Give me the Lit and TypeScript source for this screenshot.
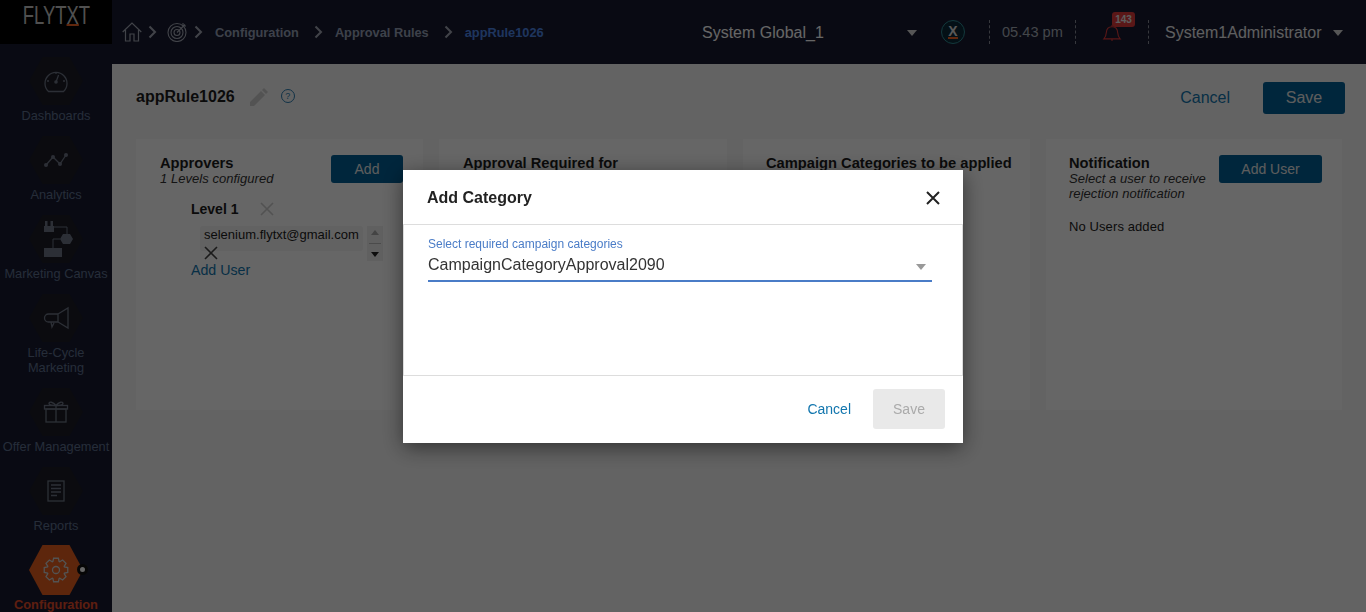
import { LitElement, html, css, svg } from "lit";
import { customElement } from "lit/decorators.js";

const chevron = html`<svg class="chev" width="9" height="14" viewBox="0 0 9 14"><path d="M1.5 1.5 7 7l-5.5 5.5" fill="none" stroke="currentColor" stroke-width="2"/></svg>`;
const cross = (size: number, color: string, w = 1.6) => html`<svg width=${size} height=${size} viewBox="0 0 14 14" style="color:${color}"><path d="M1 1l12 12M13 1 1 13" fill="none" stroke="currentColor" stroke-width=${w}/></svg>`;

// gear outline with 8 teeth, centred on 12,11
const gearPath = () => {
  const pts: string[] = [];
  for (let i = 0; i < 8; i++) {
    const a = (i * Math.PI) / 4;
    [[-0.36, 9], [-0.2, 12], [0.2, 12], [0.36, 9]].forEach(([da, r]) => {
      pts.push(`${(12 + r * Math.sin(a + da)).toFixed(2)} ${(11 - r * Math.cos(a + da)).toFixed(2)}`);
    });
  }
  return "M" + pts.join("L") + "Z";
};

const navIcons: Record<string, unknown> = {
  gauge: svg`<path d="M4.500 21.500a11 11 0 1 1 15 0z"/><circle cx="12" cy="12" r="1.800" class="solid"/><path d="M12 12l2.600-7M3 11h2M19 11h2M12 2v2"/>`,
  chart: svg`<path d="M2 16 9 8l7 7 6-9"/><circle cx="2" cy="16" r="2" class="solid"/><circle cx="9" cy="8" r="2" class="solid"/><circle cx="16" cy="15" r="2" class="solid"/><circle cx="22" cy="6" r="2" class="solid"/>`,
  horn: svg`<path d="M14 7 24 1v20L14 15zM14 7H4.500a4 4 0 0 0 0 8H14M7 15l1 5 2-4"/>`,
  gift: svg`<rect x="2" y="8" width="20" height="13"/><rect x="0.500" y="4.500" width="23" height="3.500"/><path d="M12 4.500V21M12 4.500C9 .5 5 .5 5 2.500s4 2 7 2c3 0 7 0 7-2s-4-2-7 2"/>`,
  report: svg`<rect x="4" y="1" width="16" height="20"/><path d="M7 5h10M7 8.500h10M7 12h10M7 15.500h6"/>`,
  gear: svg`<circle cx="12" cy="11" r="3.500"/><path d=${gearPath()}/>`,
};

const canvasIcon = html`<svg width="36" height="36" viewBox="0 0 36 36">
  <g class="solid">
    <rect x="6" y="5" width="10" height="6"/><rect x="7" y="0" width="2.500" height="5"/><rect x="12.500" y="0" width="2.500" height="5"/>
    <path d="M25 13h7l3 5-3 5h-7l-3-5z"/><rect x="6" y="27" width="18" height="9"/>
  </g>
  <path d="M16 6h13v7M22 18h-7v9" stroke-width="1"/>
</svg>`;

const navItems = [
  { icon: "gauge", label: ["Dashboards"] },
  { icon: "chart", label: ["Analytics"] },
  { icon: "canvas", label: ["Marketing Canvas"] },
  { icon: "horn", label: ["Life-Cycle", "Marketing"] },
  { icon: "gift", label: ["Offer Management"] },
  { icon: "report", label: ["Reports"] },
  { icon: "gear", label: ["Configuration"], active: true },
];

@customElement("app-root")
export class AppRoot extends LitElement {
  static styles = css`
    :host {
      display: block;
      height: 612px;
      overflow: hidden;
      font-family: "Liberation Sans", Arial, sans-serif;
      color: #1c1c1c;
    }
    * { box-sizing: border-box; }
    .shell { display: flex; height: 612px; background: #f8f8f8; }

    .side { width: 112px; flex: none; background: #181b30; overflow: hidden; }
    .logo { height: 44px; background: #000; display: flex; justify-content: center; }
    .logo-text { font-size: 26px; height: 30px; color: #c8c8c8; transform: scaleX(.71); white-space: nowrap; }
    .logo-text u { text-decoration-color: #f26322; text-decoration-thickness: 2px; text-underline-offset: 0; }
    .nav { display: flex; flex-direction: column; align-items: center; padding-top: 13px; gap: 13px; }
    .item { display: flex; flex-direction: column; align-items: center; width: 112px; }
    .hex-wrap { position: relative; width: 54px; height: 48px; }
    .hex {
      width: 54px; height: 48px; background: #1c1d27; color: #6f7787;
      clip-path: polygon(25% 0, 75% 0, 100% 50%, 75% 100%, 25% 100%, 0 50%);
      display: flex; align-items: center; justify-content: center;
    }
    .hex svg { fill: none; stroke: currentColor; stroke-width: 1.300; flex: none; }
    .hex svg .solid { fill: currentColor; stroke: none; }
    .label { margin-top: 3px; font-size: 12.800px; line-height: 15px; text-align: center; color: #5f7190; white-space: nowrap; }
    .item.active { margin-top: -1px; }
    .item.active .hex-wrap { height: 50px; }
    .item.active .hex { height: 50px; background: #e8601f; color: #cfcfcf; }
    .item.active .label { color: #e84c28; font-weight: bold; margin-top: 2px; }
    .dot {
      position: absolute; right: -5px; top: 19px; width: 11px; height: 11px; border-radius: 50%;
      background: #fff; border: 3px solid #111;
    }

    .main { flex: 1; min-width: 0; display: flex; flex-direction: column; }
    .top { height: 64px; flex: none; background: #181b30; display: flex; align-items: center; padding-left: 10px; }
    .crumbs { display: flex; align-items: center; width: 580px; color: #98a3ba; font-size: 12.800px; font-weight: bold; }
    .crumbs .chev { margin: 0 12px 0 15px; color: #a4a9b6; flex: none; }
    .crumbs .home { margin-right: -9px; }
    .crumbs .goal { margin-right: -8px; margin-left: -2px; }
    .crumbs .cur { color: #4d86ea; }
    .org { width: 215px; display: flex; justify-content: space-between; align-items: center; margin-right: 24px; color: #fff; font-size: 16px; padding-top: 2px; }
    .caret { width: 0; height: 0; border: 5px solid transparent; border-top: 6px solid #d8d8d8; border-bottom: 0; flex: none; }
    .brand { width: 24px; height: 24px; border-radius: 50%; background: #0c2a38; border: 1px solid #2f8d96; display: flex; align-items: center; justify-content: center; color: #ddd; font-size: 14px; font-weight: bold; margin-right: 24px; flex: none; }
    .brand span { border-bottom: 2px solid #f26322; line-height: 12px; }
    .sep { width: 0; height: 24px; border-left: 1px dashed #8a8d98; flex: none; }
    .time { font-size: 14.600px; color: #a9afba; width: 85px; padding-left: 12px; white-space: nowrap; flex: none; }
    .bell { width: 72px; padding-left: 26px; position: relative; height: 24px; display: flex; align-items: flex-end; flex: none; }
    .bell svg { margin-bottom: 2px; }
    .badge {
      position: absolute; left: 36px; top: -8px; width: 23px; height: 15px; border-radius: 3px; background: #e23a3a;
      color: #e8e8e8; font-size: 10px; font-weight: bold; line-height: 15px; text-align: center;
    }
    .user { display: flex; align-items: center; color: #ecedef; font-size: 16px; padding: 2px 0 0 16px; gap: 11px; white-space: nowrap; }

    .content { padding: 18px 21px 0 24px; }
    .head { display: flex; align-items: center; height: 32px; }
    .head h1 { margin: -2px 0 0; font-size: 16px; font-weight: bold; }
    .pencil { margin: -2px 0 0 15px; }
    .help { margin-left: 13px; margin-top: -5px; width: 14px; height: 14px; border-radius: 50%; border: 1px solid #2a7cb0; color: #2a7cb0; font-size: 9px; line-height: 12px; text-align: center; }
    .spacer { flex: 1; }
    .head a { font-size: 16px; color: #1276ae; margin-right: 33px; }
    .btn { background: #005f96; color: #e8e8e8; border-radius: 3px; display: flex; align-items: center; justify-content: center; }
    .btn.big { width: 82px; height: 32px; font-size: 16px; }
    .cards { display: flex; gap: 16px; margin-top: 25px; margin-right: 3px; }
    .card { width: 287px; height: 271px; background: #fff; padding: 16px 20px 0 24px; flex: none; }
    .card:nth-child(2) { width: 288px; }
    .card:nth-child(3) { padding-left: 23px; }
    .card:last-child { width: 296px; padding: 16px 21px 0 23px; }
    .card-head { display: flex; justify-content: space-between; align-items: flex-start; }
    .card h2 { margin: 0; font-size: 14.700px; line-height: 16px; font-weight: bold; white-space: nowrap; }
    .sub { font-size: 13px; line-height: 15px; font-style: italic; color: #333; letter-spacing: .04px; }
    .card .btn { height: 28px; font-size: 14px; flex: none; }
    .level { padding: 0 0 0 31px; margin-top: 15px; }
    .level-row { display: flex; align-items: center; font-size: 14px; font-weight: bold; gap: 22px; height: 16px; }
    .users { display: flex; margin-top: 9px; }
    .email { width: 163px; height: 25px; margin-left: 9px; background: #f4f4f4; border-radius: 3px; font-size: 13px; line-height: 16px; padding: 1px 0 0 4px; white-space: nowrap; }
    .rm { margin: -15px 0 0 13px; display: block; line-height: 0; }
    .spin { width: 16px; height: 35px; margin-left: 4px; background: #f0f0f0; display: flex; flex-direction: column; align-items: center; justify-content: space-around; }
    .spin i { width: 0; height: 0; border: 4px solid transparent; }
    .spin .up { border-bottom: 5px solid #aaa; border-top: 0; }
    .spin .down { border-top: 5px solid #222; border-bottom: 0; }
    .spin hr { width: 12px; border: 0; border-top: 1px solid #bbb; margin: 0; }
    .add-user { font-size: 14.200px; color: #1276ae; margin-top: 2px; line-height: 16px; }
    .none { font-size: 13px; margin-top: 18px; letter-spacing: .1px; }
    .notif-sub { width: 150px; }
    .w-add { width: 72px; }
    .w-user { width: 103px; }

    .overlay { position: fixed; inset: 0; background: rgba(0, 0, 0, .6); display: flex; justify-content: center; align-items: flex-start; padding-top: 170px; }
    .modal { width: 560px; height: 273px; background: #fff; box-shadow: 0 5px 20px rgba(0, 0, 0, .5); display: flex; flex-direction: column; }
    .m-head { height: 55px; display: flex; align-items: center; justify-content: space-between; padding: 1px 23px 0 24px; border-bottom: 1px solid #ddd; flex: none; }
    .m-head h3 { margin: 0; font-size: 16px; font-weight: bold; color: #222; }
    .m-body { height: 151px; flex: none; padding: 12px 30px 0 24px; border: 1px solid #ddd; border-top: 0; }
    .m-label { font-size: 12px; line-height: 14px; color: #4a7cc7; }
    .m-select { height: 31px; padding: 0 6px 2px 0; border-bottom: 2px solid #4a7cc7; display: flex; justify-content: space-between; align-items: center; font-size: 16px; color: #333; }
    .m-select .caret { border-top-color: #999; margin-top: 4px; }
    .m-foot { flex: 1; display: flex; align-items: center; justify-content: flex-end; padding: 0 18px 1px 0; gap: 22px; }
    .m-foot a { font-size: 14px; color: #1276ae; }
    .m-save { width: 72px; height: 40px; background: #e9e9e9; color: #aaa; border-radius: 3px; font-size: 14px; display: flex; align-items: center; justify-content: center; }
  `;

  render() {
    return html`
      <div class="shell">
        <aside class="side">
          <div class="logo"><div class="logo-text">FLYT<u>X</u>T</div></div>
          <nav class="nav">
            ${navItems.map(
              (n) => html`
                <div class="item ${n.active ? "active" : ""}">
                  <div class="hex-wrap">
                    <div class="hex">
                      ${n.icon === "canvas"
                        ? canvasIcon
                        : html`<svg width="30" height="30" viewBox="-3 -4 30 30">${navIcons[n.icon]}</svg>`}
                    </div>
                    ${n.active ? html`<span class="dot"></span>` : ""}
                  </div>
                  <div class="label">${n.label.map((l) => html`<div>${l}</div>`)}</div>
                </div>
              `
            )}
          </nav>
        </aside>
        <div class="main">
          <header class="top">
            <div class="crumbs">
              <svg class="home" width="20" height="20" viewBox="0 0 20 20" fill="none" stroke="#a4a9b6" stroke-width="1.200"><path d="M.7 10 10 1l9.300 9M3.500 8v11h4.500v-7h4v7h4.500V8"/></svg>
              ${chevron}
              <svg class="goal" width="20" height="20" viewBox="0 0 20 20" fill="none" stroke="#a4a9b6" stroke-width="1.100"><circle cx="10" cy="10.500" r="9"/><circle cx="10" cy="10.500" r="6"/><circle cx="10" cy="10.500" r="3"/><path d="M10 10.500 18 2.500M16 1v3h3"/></svg>
              ${chevron}
              <span>Configuration</span>${chevron}
              <span>Approval Rules</span>${chevron}
              <span class="cur">appRule1026</span>
            </div>
            <div class="org"><span>System Global_1</span><i class="caret"></i></div>
            <div class="brand"><span>X</span></div>
            <div class="sep"></div>
            <div class="time">05.43 pm</div>
            <div class="sep"></div>
            <div class="bell">
              <svg width="20" height="18" viewBox="0 0 20 20" fill="none" stroke="#e23a3a" stroke-width="1.200"><path d="M1 16.500c2-2 2.500-4 2.700-7C4 5 6 3 10 3s6 2 6.300 6.500c.2 3 .7 5 2.700 7zM10 16.500V19M10 3V1"/></svg>
              <span class="badge">143</span>
            </div>
            <div class="sep"></div>
            <div class="user"><span>System1Administrator</span><i class="caret"></i></div>
          </header>
          <main class="content">
            <div class="head">
              <h1>appRule1026</h1>
              <svg class="pencil" width="18" height="18" viewBox="0 0 18 18" fill="#cfcfcf"><path d="M0 18v-4L11 3l4 4L4 18zM12 2l2-2 4 4-2 2z"/></svg>
              <div class="help">?</div>
              <div class="spacer"></div>
              <a>Cancel</a>
              <div class="btn big">Save</div>
            </div>
            <div class="cards">
              <section class="card">
                <div class="card-head">
                  <div>
                    <h2>Approvers</h2>
                    <div class="sub">1 Levels configured</div>
                  </div>
                  <div class="btn w-add">Add</div>
                </div>
                <div class="level">
                  <div class="level-row"><span>Level 1</span>${cross(14, "#ccc")}</div>
                  <div class="users">
                    <div class="email">selenium.flytxt@gmail.com</div>
                    <div class="spin"><i class="up"></i><hr /><i class="down"></i></div>
                  </div>
                  <div class="rm">${cross(14, "#444")}</div>
                  <div class="add-user">Add User</div>
                </div>
              </section>
              <section class="card"><h2>Approval Required for</h2></section>
              <section class="card"><h2>Campaign Categories to be applied</h2></section>
              <section class="card">
                <div class="card-head">
                  <div>
                    <h2>Notification</h2>
                    <div class="sub notif-sub">Select a user to receive rejection notification</div>
                  </div>
                  <div class="btn w-user">Add User</div>
                </div>
                <div class="none">No Users added</div>
              </section>
            </div>
          </main>
        </div>
      </div>
      <div class="overlay">
        <div class="modal">
          <div class="m-head">
            <h3>Add Category</h3>
            ${cross(14, "#222", 2)}
          </div>
          <div class="m-body">
            <div class="m-label">Select required campaign categories</div>
            <div class="m-select"><span>CampaignCategoryApproval2090</span><i class="caret"></i></div>
          </div>
          <div class="m-foot">
            <a>Cancel</a>
            <div class="m-save">Save</div>
          </div>
        </div>
      </div>
    `;
  }
}
